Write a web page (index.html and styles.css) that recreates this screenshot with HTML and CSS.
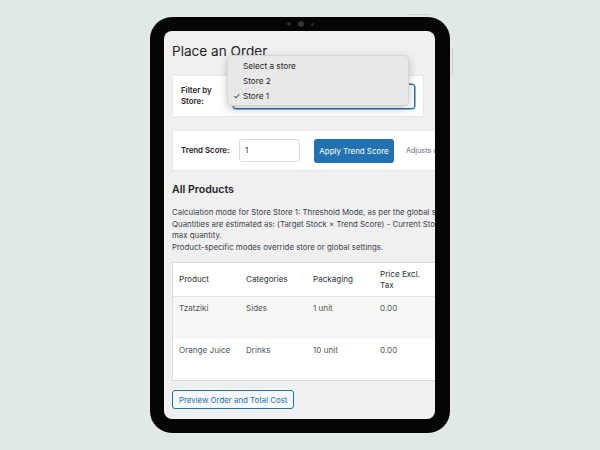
FILE: index.html
```html
<!DOCTYPE html>
<html lang="en">
<head>
    <meta charset="UTF-8">
    <title>Place an Order</title>
    <link rel="stylesheet" href="styles.css">
</head>
<body>
    <div class="stage">
        <div class="tablet">
            <span class="side-btn top"></span>
            <span class="side-btn right"></span>
            <div class="camera">
                <span class="dot small"></span>
                <span class="dot big"></span>
                <span class="dot tiny"></span>
            </div>
            <div class="screen">
                <div class="page">
                    <h1>Place an Order</h1>

                    <div class="card filter-card">
                        <label class="label">Filter by<br>Store:</label>
                        <div class="select"></div>
                    </div>

                    <div class="card trend-card">
                        <label class="label">Trend Score:</label>
                        <div class="input">1</div>
                        <button class="btn-primary">Apply Trend Score</button>
                        <span class="hint">Adjusts order quantities</span>
                    </div>

                    <h2>All Products</h2>
                    <p class="notes">
                        Calculation mode for Store Store 1: Threshold Mode, as per the global settings.<br>
                        Quantities are estimated as: (Target Stock × Trend Score) - Current Stock, capped at<br>
                        max quantity.<br>
                        Product-specific modes override store or global settings.
                    </p>

                    <table class="products">
                        <thead>
                            <tr>
                                <th>Product</th>
                                <th>Categories</th>
                                <th>Packaging</th>
                                <th>Price Excl.<br>Tax</th>
                                <th>Current<br>Stock</th>
                            </tr>
                        </thead>
                        <tbody>
                            <tr class="alt">
                                <td>Tzatziki</td>
                                <td>Sides</td>
                                <td>1 unit</td>
                                <td>0.00</td>
                                <td>4</td>
                            </tr>
                            <tr>
                                <td>Orange Juice</td>
                                <td>Drinks</td>
                                <td>10 unit</td>
                                <td>0.00</td>
                                <td>12</td>
                            </tr>
                        </tbody>
                    </table>

                    <button class="btn-secondary">Preview Order and Total Cost</button>
                </div>

                <div class="dropdown">
                    <div class="option">Select a store</div>
                    <div class="option">Store 2</div>
                    <div class="option checked"><span class="check">✓</span>Store 1</div>
                </div>
            </div>
        </div>
    </div>
</body>
</html>
```

FILE: styles.css
```css
body {
    margin: 0;
    background-color: #e1e9e5;
    font-family: Inter, "Noto Sans", sans-serif;
    overflow: hidden;
}

.stage {
    width: 600px;
    height: 450px;
    display: flex;
    align-items: center;
    justify-content: center;
}

.tablet {
    position: relative;
    width: 300px;
    height: 416px;
    box-sizing: border-box;
    padding: 14px 15px 14px 14px;
    background: #050505;
    border-radius: 22px;
}

.side-btn {
    position: absolute;
    background: #c9d0cd;
    border-radius: 1px;
}
.side-btn.top {
    top: -3px;
    left: 258px;
    width: 22px;
    height: 1px;
}
.side-btn.right {
    top: 32px;
    right: -3px;
    width: 1px;
    height: 26px;
}

.camera {
    position: absolute;
    top: 4px;
    left: 0;
    right: 0;
    display: flex;
    justify-content: center;
    align-items: center;
    gap: 7px;
}
.dot {
    border-radius: 50%;
    background: #2a2a2c;
}
.dot.small { width: 4px; height: 4px; }
.dot.big { width: 6px; height: 6px; background: #333336; }
.dot.tiny { width: 3px; height: 3px; }

.screen {
    position: relative;
    height: 100%;
    background: #f0f0f1;
    border-radius: 8px;
    overflow: hidden;
}

.page {
    width: 340px;
    padding: 11px 0 0 8px;
    color: #3c434a;
    font-size: 7.85px;
}

h1 {
    margin: 0;
    font-size: 13.6px;
    line-height: 18px;
    font-weight: 400;
    color: #1d2327;
}

.card {
    background: #fff;
    border: 1px solid #e6e7e8;
    border-radius: 2px;
    display: flex;
    align-items: center;
    box-sizing: border-box;
}
.card > * {
    flex-shrink: 0;
    white-space: nowrap;
}

.label {
    font-weight: 600;
    color: #1d2327;
    line-height: 11px;
}

.filter-card {
    margin-top: 15px;
    width: 252px;
    height: 42px;
    padding: 0 8px;
}
.filter-card .label {
    width: 52px;
}
.select {
    width: 182px;
    height: 25px;
    box-sizing: border-box;
    border: 1px solid #2271b1;
    border-radius: 3px;
    box-shadow: 0 0 0 0.5px #2271b1;
}

.trend-card {
    margin-top: 13px;
    width: 300px;
    height: 41px;
    padding: 0 8px;
}
.trend-card .label {
    width: 58px;
}
.input {
    width: 61px;
    height: 23px;
    box-sizing: border-box;
    border: 1px solid #dcdcde;
    border-radius: 3px;
    padding: 0 5px;
    font-size: 8px;
    line-height: 21px;
    color: #2c3338;
}
.btn-primary {
    margin-left: 14px;
    width: 80px;
    height: 24px;
    padding: 0;
    border: none;
    border-radius: 3px;
    background: #2271b1;
    color: #fff;
    font-family: inherit;
    font-size: 7.9px;
}
.hint {
    margin-left: 12px;
    color: #646970;
    font-size: 7.2px;
}

h2 {
    margin: 12px 0 0;
    font-size: 10.6px;
    line-height: 14px;
    font-weight: 600;
    color: #1d2327;
}

.notes {
    margin: 10px 0 0;
    line-height: 11.6px;
    white-space: nowrap;
}

.products {
    margin-top: 9px;
    border-collapse: collapse;
    background: #fff;
    border: 1px solid #dcdcde;
    color: #50575e;
    font-size: 8.1px;
    text-align: left;
}
.products th {
    font-weight: 400;
    color: #2c3338;
    height: 33px;
    width: 55px;
    padding: 0 6px;
    line-height: 11px;
    vertical-align: middle;
    border-bottom: 1px solid #e2e3e4;
}
.products td {
    height: 42px;
    padding: 6px 6px 0;
    box-sizing: border-box;
    vertical-align: top;
    line-height: 11px;
}
.products tr.alt td {
    background: #f6f7f7;
}

.btn-secondary {
    display: block;
    margin-top: 9px;
    height: 19px;
    padding: 0 6px;
    border: 1px solid #2271b1;
    border-radius: 3px;
    background: #f6f7f7;
    color: #2271b1;
    font-family: inherit;
    font-size: 7.85px;
}

.dropdown {
    position: absolute;
    top: 24px;
    left: 63px;
    width: 182px;
    height: 51px;
    box-sizing: border-box;
    padding-top: 3px;
    background: #e8e8e6;
    border: 1px solid #d6d6d4;
    border-radius: 5px;
    box-shadow: 0 3px 9px rgba(0, 0, 0, 0.22);
    color: #262626;
    font-size: 8.2px;
}
.option {
    position: relative;
    height: 15px;
    line-height: 15px;
    padding-left: 15px;
}
.check {
    position: absolute;
    left: 5px;
}
```
